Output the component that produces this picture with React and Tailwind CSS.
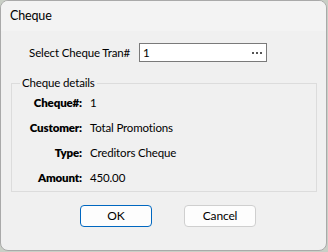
export default function App() {
  const rows = [
    ["Cheque#:", "1"],
    ["Customer:", "Total Promotions"],
    ["Type:", "Creditors Cheque"],
    ["Amount:", "450.00"],
  ];
  return (
    <div
      className="w-[328px] h-[252px] bg-[#c9cfc6] text-[11.5px] tracking-[-0.15px] text-black"
      style={{ fontFamily: 'Lato, "Noto Sans", sans-serif' }}
    >
      <div className="w-[327px] h-[251px] rounded-[8px] border border-[#a9a9a9] bg-[#f0f0f0] overflow-hidden flex flex-col">
        <div className="h-[30px] bg-[#f3f3f3] flex items-center pl-[9px] text-[12.5px] leading-none">
          Cheque
        </div>
        <div className="pt-[12px] flex items-center">
          <div className="w-[129px] text-right leading-none">Select Cheque Tran#</div>
          <div className="ml-[9px] w-[128px] h-[19px] bg-white border border-[#7a7a7a] flex items-center justify-between pl-[3px] pr-[4px] leading-none">
            <span>1</span>
            <span className="flex gap-[2px] items-center">
              <span className="w-[2px] h-[2px] bg-[#555]" />
              <span className="w-[2px] h-[2px] bg-[#555]" />
              <span className="w-[2px] h-[2px] bg-[#555]" />
            </span>
          </div>
        </div>
        <fieldset className="mt-[13px] ml-[10px] w-[306px] border border-[#dcdcdc] pb-[1px]">
          <legend className="ml-[8px] px-[2px] leading-[16px]">Cheque details</legend>
          <div className="-mt-[1px]">
            {rows.map(([k, v]) => (
              <div key={k} className="h-[25px] flex items-center leading-none">
                <div className="w-[70px] text-right font-extrabold">{k}</div>
                <div className="ml-[8px]">{v}</div>
              </div>
            ))}
          </div>
        </fieldset>
        <div className="mt-[13px] ml-[79px] flex gap-[32px]">
          <button className="w-[72px] h-[22px] rounded-[4px] border-[1.5px] border-[#0067c0] bg-[#fdfdfd] leading-none text-[12px]">
            OK
          </button>
          <button className="w-[72px] h-[22px] rounded-[4px] border border-[#cfcfcf] bg-[#fdfdfd] leading-none text-[12px]">
            Cancel
          </button>
        </div>
      </div>
    </div>
  );
}
